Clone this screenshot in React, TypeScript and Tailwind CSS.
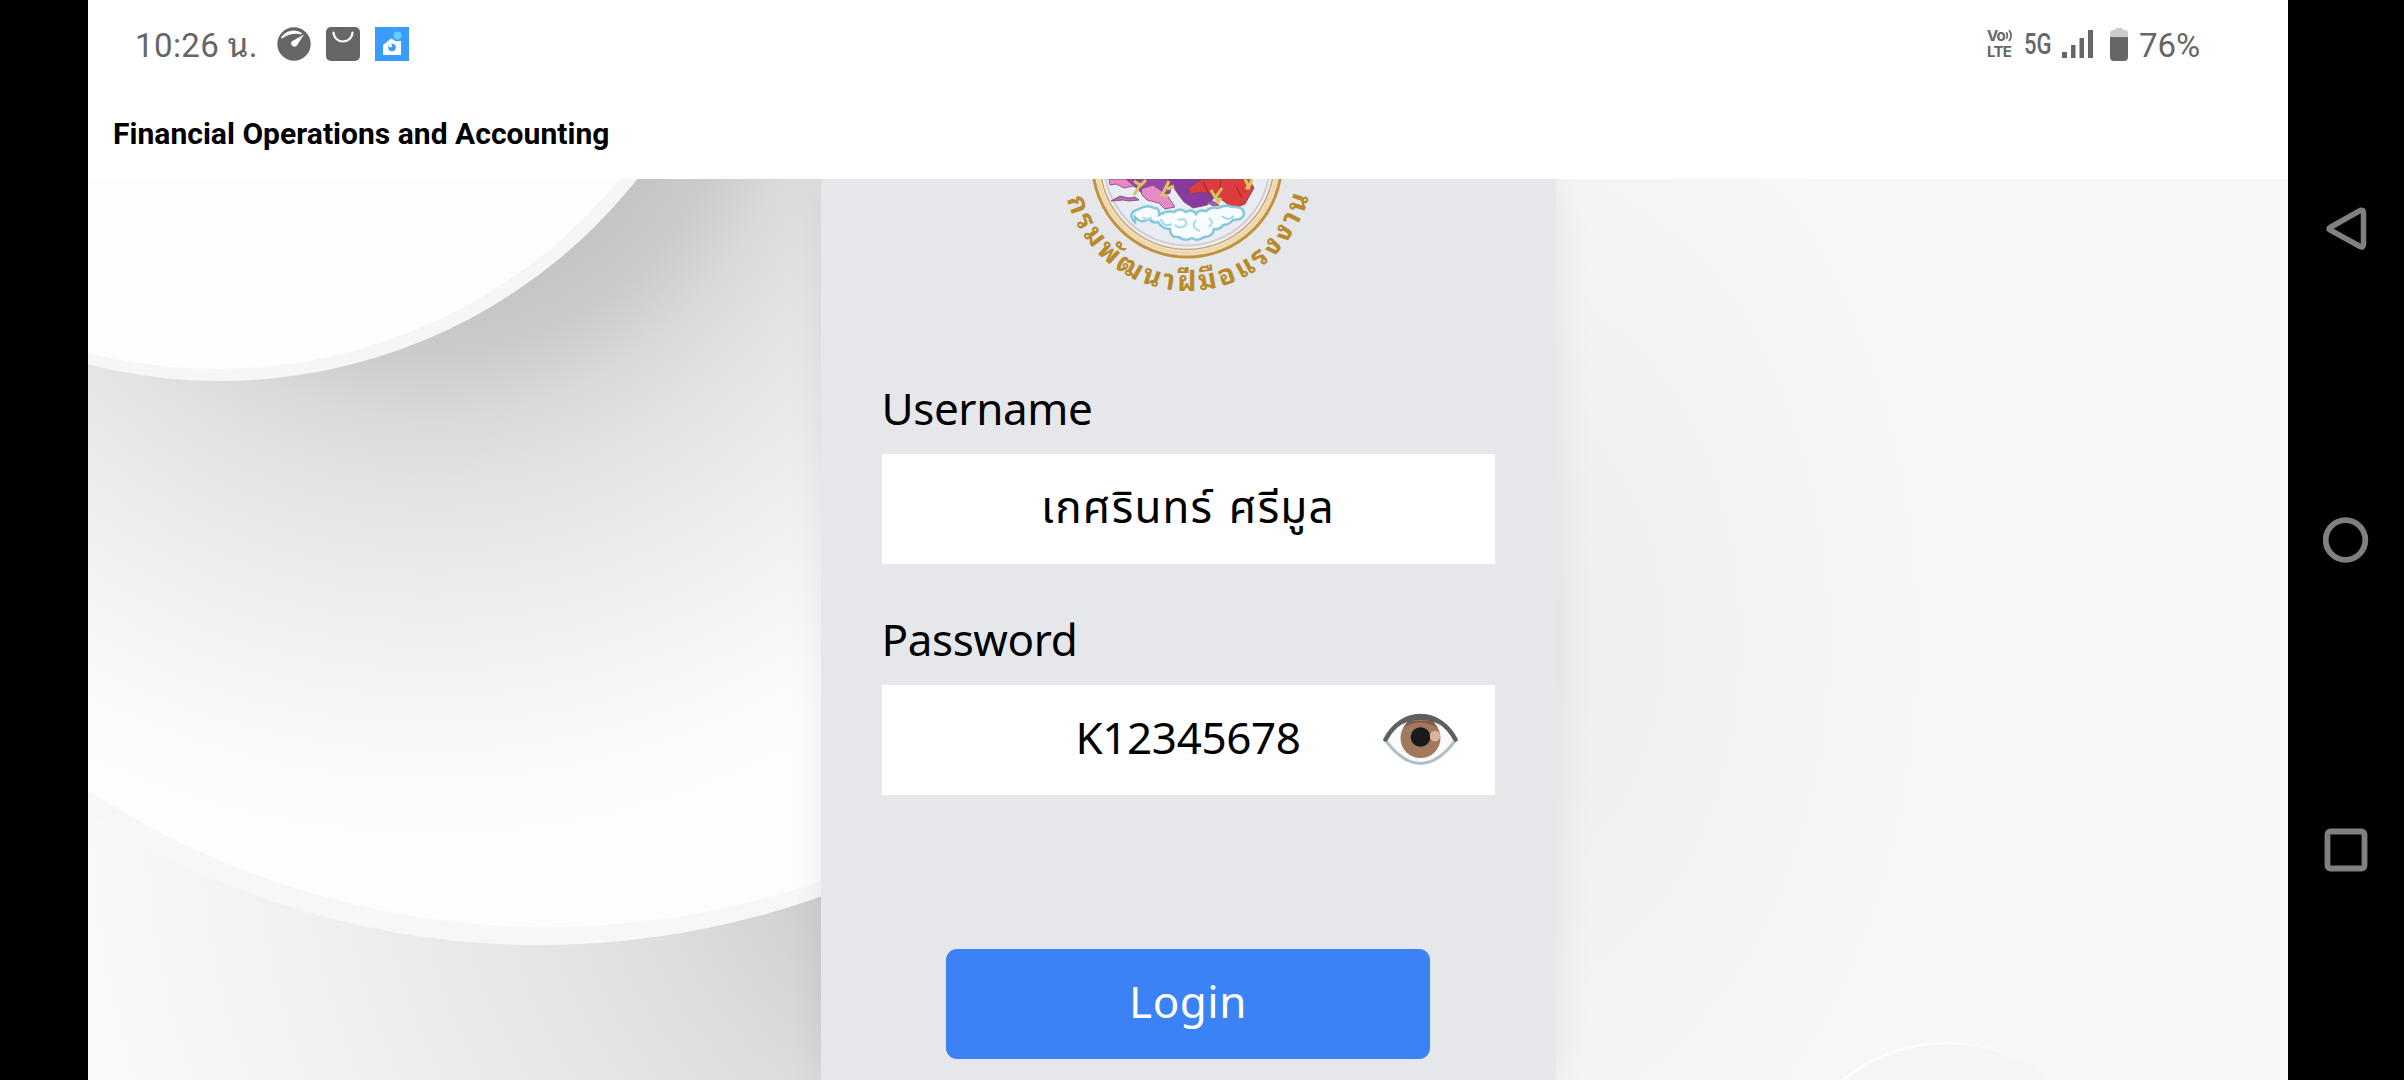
import React, { useState } from "react";

const BODY_FONT = "font-['Noto_Sans','Noto_Sans_Thai',sans-serif]";

export default function App() {
  return (
    <div className="flex h-[1080px] w-[2404px] overflow-hidden bg-black">
      <div className="ml-[88px] flex w-[2200px] flex-col bg-white">
        <StatusBar />
        <header className="flex h-[91px] items-center pl-[25px]">
          <h1 className="whitespace-nowrap font-['Roboto',sans-serif] text-[30px] font-bold leading-none tracking-[0.03px] text-black">
            Financial Operations and Accounting
          </h1>
        </header>
        <main className="relative flex h-[901px] justify-center overflow-hidden bg-[#f8f8f8]">
          <Backdrop />
          <LoginCard />
        </main>
      </div>
      <SystemNav />
    </div>
  );
}

function StatusBar() {
  return (
    <div className="flex h-[88px] items-center justify-between pl-[47px] pr-[88px] font-['Roboto','Noto_Sans_Thai_Looped','Noto_Serif_Thai','Loma','Noto_Sans_Thai',sans-serif] text-[33px] leading-none text-[#666]">
      <div className="flex items-center">
        <span className="w-[138px] whitespace-nowrap pt-[2px] tracking-[0.4px]">
          10:26 น.
        </span>
        <svg className="ml-[4px] size-[34px]" viewBox="0 0 34 34">
          <circle cx="17" cy="17" r="16.7" fill="#666" />
          <path
            d="M5 10.500C9 4.500 17 2.500 24 6.500Q14 4.500 5 10.500z"
            fill="#fff"
            stroke="#fff"
            strokeWidth="1.6"
            strokeLinejoin="round"
          />
          <path d="M27 7.500 20 18.600a3.400 3.400 0 0 1-5.400-4z" fill="#fff" />
        </svg>
        <svg className="ml-[15px] size-[34px]" viewBox="0 0 34 34">
          <rect width="34" height="34" rx="5" fill="#666" />
          <path
            d="M7.500 5.500c1 12 18 12 19 0"
            fill="none"
            stroke="#fff"
            strokeWidth="2.2"
            strokeLinecap="round"
          />
        </svg>
        <svg className="ml-[15px] size-[34px]" viewBox="0 0 34 34">
          <rect width="34" height="34" fill="#3b9cff" />
          <path d="M8 18 16 11.500l4.500 2.500h5.500v14H8z" fill="#fff" />
          <circle cx="22.500" cy="8.500" r="4" fill="#5fd0ff" />
          <circle cx="17" cy="20.500" r="3.800" fill="#3b9cff" />
          <circle cx="15.400" cy="18.800" r="1.800" fill="#fff" />
        </svg>
      </div>

      <div className="flex items-center">
        <div className="flex w-[28px] flex-col items-start font-['Inter',sans-serif] text-[15px] font-bold leading-[16px] tracking-[-0.7px]">
          <span className="flex">
            Vo
            <svg className="mt-[1px] h-[13px] w-[9px]" viewBox="0 0 9 14">
              <path
                d="M1 3.500q2.400 3.500 0 7M4 1q4.500 6 0 12"
                fill="none"
                stroke="#666"
                strokeWidth="1.800"
              />
            </svg>
          </span>
          <span>LTE</span>
        </div>
        <span className="ml-[9px] w-[28px] origin-left scale-x-[0.76] text-[29px] font-medium">
          5G
        </span>
        <svg className="ml-[10px] h-[28px] w-[31px]" viewBox="0 0 31 28">
          <path
            d="M0 22h5v6H0zM9 15h4.500v13H9zM17.500 8H22v20h-4.500zM26 0h5v28h-5z"
            fill="#666"
          />
        </svg>
        <svg className="ml-[17px] h-[33px] w-[18px]" viewBox="0 0 18 33">
          <path
            d="M5 2q0-2 2-2h4q2 0 2 2h2q3 0 3 3v5H0V5q0-3 3-3z"
            fill="#ccc"
          />
          <path d="M0 9h18v20q0 4-4 4H4q-4 0-4-4z" fill="#666" />
        </svg>
        <span className="ml-[11px] w-[61px] pt-[2px]">76%</span>
      </div>
    </div>
  );
}

function LoginCard() {
  const [showPassword, setShowPassword] = useState(true);

  return (
    <section
      className={`relative flex w-[735px] flex-col items-center bg-[#e5e7eb] px-[61px] text-[44px] text-black shadow-[0_0_36px_rgba(0,0,0,0.07)] ${BODY_FONT}`}
    >
      <Emblem />
      <form
        className="mt-[47px] flex w-full flex-col items-center"
        onSubmit={(e) => e.preventDefault()}
      >
        <label className="flex w-full flex-col">
          <span className="h-[88px] leading-[84px] tracking-[-0.4px]">
            Username
          </span>
          <input
            className="h-[110px] w-full bg-white text-center tracking-[1.2px] outline-none [word-spacing:3px]"
            defaultValue="เกศรินทร์ ศรีมูล"
          />
        </label>
        <label className="mt-[33px] flex w-full flex-col">
          <span className="h-[88px] leading-[84px] tracking-[-0.4px]">
            Password
          </span>
          <span className="relative">
            <input
              className="h-[110px] w-full bg-white pb-[6px] text-center tracking-[-0.4px] outline-none"
              type={showPassword ? "text" : "password"}
              defaultValue="K12345678"
            />
            <button
              type="button"
              className="absolute right-[37px] top-[28px]"
              onClick={() => setShowPassword((v) => !v)}
            >
              <EyeIcon />
            </button>
          </span>
        </label>
        <button
          type="submit"
          className="mt-[154px] h-[110px] w-[484px] rounded-[11px] bg-[#3b82f6] pb-[6px] tracking-[0.5px] text-white"
        >
          Login
        </button>
      </form>
    </section>
  );
}

function EyeIcon() {
  return (
    <svg className="h-[53px] w-[75px]" viewBox="0 0 75 53">
      <path d="M3 27Q20 3 37.500 3T72 27Q54 50 37.500 50T3 27z" fill="#fafafa" />
      <path
        d="M3 28Q20 50.500 37.500 50.500T72 28"
        fill="none"
        stroke="#b0bec5"
        strokeWidth="3"
      />
      <circle cx="37.500" cy="25" r="20" fill="#a1795f" />
      <path d="M20 15Q37 4 55 15L50 8H25z" fill="#7d5b49" />
      <circle cx="37.500" cy="24" r="9.800" fill="#1a1a1a" />
      <circle cx="52" cy="23" r="5.200" fill="#dcb49c" />
      <path
        d="M2.500 26.500C19 -5 56 -5 72.500 26.500"
        fill="none"
        stroke="#5e6060"
        strokeWidth="4.500"
        strokeLinecap="round"
      />
      <path d="M10 16C24 -4 51 -4 65 16Q37.500 -2 10 16z" fill="#5e6060" />
    </svg>
  );
}

// Lower half of the department seal; the top is scrolled out of view
function Emblem() {
  return (
    <svg className="h-[140px] w-[300px] overflow-visible" viewBox="0 9 300 140">
      <defs>
        <path id="seal-arc" d="M24.500 -4A125 125 0 0 0 274.500 -4" />
      </defs>
      <circle cx="149" cy="-7.500" r="94.500" fill="#eeeef2" stroke="#c1933c" strokeWidth="3" />
      <circle cx="149" cy="-7.500" r="90.500" fill="none" stroke="#f0d8ae" strokeWidth="4" />
      <circle cx="149" cy="-7.500" r="87" fill="none" stroke="#c9a765" strokeWidth="1.500" />
      <circle cx="149" cy="-7.500" r="83" fill="#e9ecf2" stroke="#cfcfd4" strokeWidth="2" />
      <g stroke="#6b4a6e" strokeWidth="0.800">
        <path d="M71 9h34l-2 5-8 2-9 2-8-4-6 1z" fill="#ee86c4" />
        <path d="M73 31l9-5 9 2 6-1 4 3-10 1-6-1z" fill="#bb6cae" />
        <path d="M88 9h46l-2 14-12 6-14-4-9-8z" fill="#9a45a8" />
        <path d="M103 19l12-4 14 10 8 12-10 2-6-6-12-3-5-5z" fill="#e78bc6" />
        <path d="M130 9h43l6 16-10 10-14 3-9-6-6-8z" fill="#8a3a9e" />
        <path d="M167 32l8-1 6 4-5 1z" fill="#b25aa8" />
        <path d="M150 19l14-10h47l5 9-9 16-12 5-8-7-12-8-12-2-10 2z" fill="#dd3c3c" />
      </g>
      <path
        d="M165 12l6 12M183 10l-2 12M198 16l6 12"
        fill="none"
        stroke="#a32a33"
        strokeWidth="1.200"
      />
      <path
        d="M96 11l6 4-6 10M108 10l-6 6M131 11l-7 14 6 1M136 16l-7 3M173 20l7 12 3-4M184 18l-7 10M207 9l4 8 3-8M214 12l-6 7"
        fill="none"
        stroke="#d9c65f"
        strokeWidth="3"
      />
      <path
        d="M97 52q-9-9 4-13 8-5 15-1 6 0 5 7 8-5 15-3 6-5 12 0 6-4 10 2 3-5 10-3 6-5 12-3 9-4 14-1 12-1 12 7-1 6-11 6-4 5-10 5-3 5-9 4-1 8-10 8-6 5-12 1-8 4-13-1-9 1-9-8-8 0-12-7-4 2-9-3-8 5-14-2z"
        fill="#f7fcff"
        stroke="#86c8da"
        strokeWidth="2.500"
      />
      <path
        d="M105 47q5 5 9 0M123 49q2 9 11 5M140 50q9-3 8 5-6 5-11 0M158 50q-6 8 4 11M171 48q6 4 0 9M184 46q6 6 12 0"
        fill="none"
        stroke="#a9d9e5"
        strokeWidth="2"
      />
      <text
        className="font-['Noto_Sans_Thai_Looped','Loma','Noto_Sans_Thai','Noto_Sans',sans-serif] text-[28px] font-bold"
        fill="#b88a2c"
      >
        <textPath href="#seal-arc" startOffset="33" textLength="329">
          กรมพัฒนาฝีมือแรงงาน
        </textPath>
      </text>
    </svg>
  );
}

function Backdrop() {
  return (
    <svg
      className="absolute inset-0 h-full w-full"
      viewBox="88 179 2200 901"
      preserveAspectRatio="none"
    >
      <defs>
        <radialGradient id="floor" gradientUnits="userSpaceOnUse" cx="1000" cy="800" r="1000">
          <stop offset="0.220" stopColor="#d0d0d0" />
          <stop offset="0.344" stopColor="#dcdcdc" />
          <stop offset="0.477" stopColor="#e5e5e5" />
          <stop offset="0.560" stopColor="#e9e9e9" />
          <stop offset="0.707" stopColor="#f1f1f1" />
          <stop offset="0.950" stopColor="#fafafa" />
        </radialGradient>
        <radialGradient id="disc" gradientUnits="userSpaceOnUse" cx="430" cy="50" r="800">
          <stop offset="0.310" stopColor="#c5c5c5" />
          <stop offset="0.380" stopColor="#cbcbcb" />
          <stop offset="0.460" stopColor="#d9d9d9" />
          <stop offset="0.540" stopColor="#e2e2e2" />
          <stop offset="0.660" stopColor="#ebebeb" />
          <stop offset="0.800" stopColor="#f4f4f4" />
          <stop offset="0.920" stopColor="#fbfbfb" />
          <stop offset="1" stopColor="#fdfdfd" />
        </radialGradient>
        <radialGradient
          id="side"
          gradientUnits="userSpaceOnUse"
          cx="0"
          cy="0"
          r="1"
          gradientTransform="translate(1500 640) scale(440 640)"
        >
          <stop offset="0" stopColor="#ececec" />
          <stop offset="0.500" stopColor="#f2f2f2" />
          <stop offset="1" stopColor="#f7f7f7" />
        </radialGradient>
        <linearGradient id="rim" x1="0" x2="1">
          <stop offset="0" stopColor="#fff" />
          <stop offset="0.400" stopColor="#fff" />
          <stop offset="0.750" stopColor="#fff" stopOpacity="0" />
        </linearGradient>
      </defs>
      <rect x="88" y="179" width="1100" height="901" fill="url(#floor)" />
      <circle cx="540" cy="105" r="840" fill="#f7f7f7" />
      <circle cx="547" cy="87" r="840" fill="url(#disc)" />
      <circle cx="220" cy="-151" r="532" fill="#f6f6f6" />
      <circle cx="217" cy="-153" r="522" fill="#fefefe" />
      <rect x="1188" y="179" width="1100" height="901" fill="url(#side)" />
      <circle cx="1947" cy="1207" r="164" fill="#f5f5f5" stroke="url(#rim)" strokeWidth="2.500" />
    </svg>
  );
}

function SystemNav() {
  return (
    <nav className="flex w-[116px] flex-col items-center justify-between pb-[206px] pt-[206px]">
      <svg className="h-[46px] w-[48px]" viewBox="0 0 48 46" fill="none" stroke="#808080" strokeWidth="5.500">
        <path d="M8 21.500 38 4.500q3.500-1 3.500 2v32q0 3.500-3.500 2L8 24q-2-1.500 0-2.500z" />
      </svg>
      <svg className="h-[46px] w-[46px]" viewBox="0 0 46 46" fill="none" stroke="#808080" strokeWidth="5.800">
        <circle cx="22.500" cy="23" r="19.800" />
      </svg>
      <svg className="h-[46px] w-[44px]" viewBox="0 0 44 46" fill="none" stroke="#808080" strokeWidth="5.800">
        <rect x="3.500" y="3.500" width="37" height="37" rx="3" />
      </svg>
    </nav>
  );
}
